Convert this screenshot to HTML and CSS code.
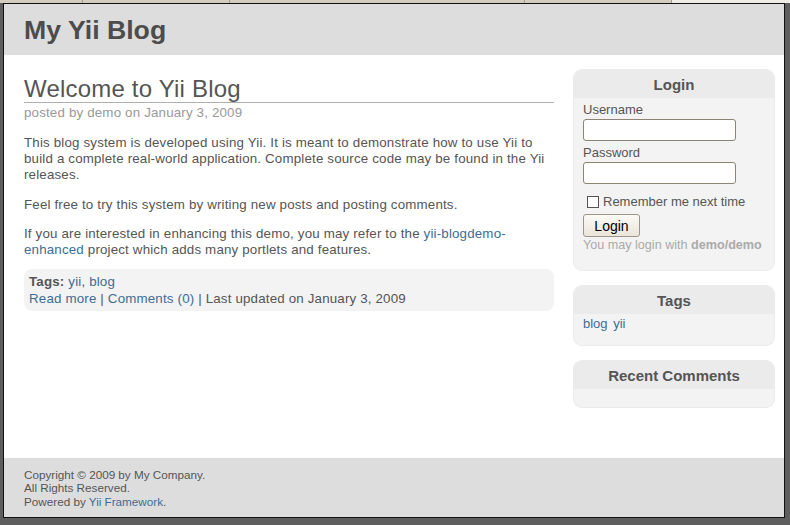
FILE: index.html
```
<!DOCTYPE html>
<html lang="en">
<head>
<meta charset="utf-8">
<title>My Yii Blog</title>
<link rel="stylesheet" href="styles.css">
</head>
<body>
<div class="tabstrip">
  <span class="tab t1"></span>
  <span class="tab t2"></span>
  <span class="tab t3"></span>
  <span class="tab t4"></span>
  <span class="tab rest"></span>
</div>
<div class="window">
  <div class="header">
    <div class="logo">My Yii Blog</div>
  </div>
  <div class="page">
    <div class="main">
      <div class="post">
        <h2 class="post-title">Welcome to Yii Blog</h2>
        <div class="post-author">posted by demo on January 3, 2009</div>
        <div class="post-content">
          <p>This blog system is developed using Yii. It is meant to demonstrate how to use Yii to build a complete real-world application. Complete source code may be found in the Yii releases.</p>
          <p>Feel free to try this system by writing new posts and posting comments.</p>
          <p>If you are interested in enhancing this demo, you may refer to the <a href="#">yii-blogdemo-</a><wbr><a href="#">enhanced</a> project which adds many portlets and features.</p>
        </div>
        <div class="nav">
          <b>Tags:</b> <a href="#">yii</a>, <a href="#">blog</a><br>
          <a href="#">Read more</a> | <a href="#">Comments (0)</a> | Last updated on January 3, 2009
        </div>
      </div>
    </div>
    <div class="sidebar">
      <div class="portlet">
        <div class="portlet-title">Login</div>
        <div class="portlet-content login">
          <label class="lbl">Username</label>
          <input class="field" type="text">
          <label class="lbl">Password</label>
          <input class="field" type="password">
          <div class="remember"><input class="check" type="checkbox"><span>Remember me next time</span></div>
          <button class="btn" type="button">Login</button>
          <div class="hint">You may login with <b>demo/demo</b></div>
        </div>
      </div>
      <div class="portlet">
        <div class="portlet-title">Tags</div>
        <div class="portlet-content tags">
          <a href="#">blog</a> <a href="#">yii</a>
        </div>
      </div>
      <div class="portlet">
        <div class="portlet-title">Recent Comments</div>
        <div class="portlet-content empty"></div>
      </div>
    </div>
  </div>
  <div class="footer">
    Copyright &copy; 2009 by My Company.<br>
    All Rights Reserved.<br>
    Powered by <a href="#">Yii Framework</a>.
  </div>
</div>
</body>
</html>
```
FILE: styles.css
```
html, body {
  margin: 0;
  padding: 0;
}
body {
  background: #5e5e5e;
  font-family: "Liberation Sans", Arial, sans-serif;
  font-size: 13.33px;
  color: #555;
  width: 790px;
  height: 525px;
  overflow: hidden;
}
a {
  color: #406c96;
  text-decoration: none;
}
.tabstrip {
  display: flex;
  height: 3px;
}
.tab {
  background: #d3cdbf;
  border-right: 1px solid #a29d91;
}
.t1 { width: 82px; }
.t2 { width: 146px; }
.t3 { width: 294px; }
.t4 { width: 146px; }
.rest {
  flex: 1;
  background: #efebe5;
  border-right: 0;
}
.window {
  margin-left: 3px;
  width: 780px;
  border: 1px solid #111;
  background: #fff;
}
.header {
  background: #dddddd;
  padding: 11px 20px 9px;
  height: 31px;
}
.logo {
  font-size: 26.67px;
  font-weight: bold;
  color: #4c4c4c;
  line-height: 31px;
}
.page {
  display: flex;
  gap: 20px;
  padding: 0 9px 0 20px;
  height: 403px;
}
.main {
  width: 530px;
  padding-top: 20px;
  letter-spacing: 0.17px;
}
.post-title {
  margin: 0;
  font-size: 24px;
  font-weight: normal;
  color: #555;
  line-height: 27px;
  letter-spacing: 0.2px;
  border-bottom: 1px solid #b0b0b0;
}
.post-author {
  color: #999;
  line-height: 16px;
  margin-top: 2px;
}
.post-content {
  margin-top: 14px;
  line-height: 16px;
}
.post-content p {
  margin: 0 0 13.6px;
}
.post-content p:last-child {
  margin-bottom: 0;
}
.nav {
  background: #f3f3f3;
  border-radius: 8px;
  padding: 4px 5px 4px;
  line-height: 17px;
  margin-top: 11px;
}
.nav b {
  color: #555;
}
.sidebar {
  width: 200px;
  padding-top: 15px;
  display: flex;
  flex-direction: column;
  gap: 16px;
  font-size: 13px;
}
.portlet {
  background: #f3f3f3;
  border-radius: 8px;
  box-shadow: 0 0 0 1px #ebebeb;
}
.portlet-title {
  background: #ebebeb;
  border-radius: 8px 8px 0 0;
  height: 28px;
  line-height: 29px;
  text-align: center;
  font-weight: bold;
  font-size: 15px;
  color: #555;
}
.portlet-content {
  padding: 0 9px;
}
.login {
  display: flex;
  flex-direction: column;
  align-items: flex-start;
  padding-top: 4px;
  padding-bottom: 17px;
}
.lbl {
  line-height: 16px;
}
.field {
  box-sizing: border-box;
  width: 153px;
  height: 22px;
  margin: 1px 0 4px;
  border: 1px solid #8d8475;
  border-radius: 3px;
  background: #fff;
  padding: 0;
}
.remember {
  display: flex;
  align-items: center;
  margin-top: 6px;
  padding-left: 4px;
  line-height: 16px;
}
.check {
  appearance: none;
  -webkit-appearance: none;
  box-sizing: border-box;
  width: 12px;
  height: 12px;
  margin: 0 4px 0 0;
  border: 1px solid #555;
  background: #fff;
}
.btn {
  box-sizing: border-box;
  margin-top: 4px;
  height: 23px;
  width: 57px;
  padding: 0;
  border: 1px solid #9c968a;
  border-radius: 3px;
  background: linear-gradient(#fcfaf6, #ebe5da);
  font-family: "Liberation Sans", Arial, sans-serif;
  font-size: 14px;
  color: #000;
}
.hint {
  color: #aaa;
  line-height: 16px;
  margin-top: 0;
  font-size: 12.6px;
  white-space: nowrap;
}
.tags {
  padding-top: 2px;
  padding-bottom: 13px;
  line-height: 16px;
}
.tags a {
  margin-right: 2px;
}
.empty {
  height: 18px;
}
.footer {
  background: #dddddd;
  padding: 10px 20px 10px;
  height: 39px;
  font-size: 11.7px;
  line-height: 13.33px;
  color: #555;
}
```
